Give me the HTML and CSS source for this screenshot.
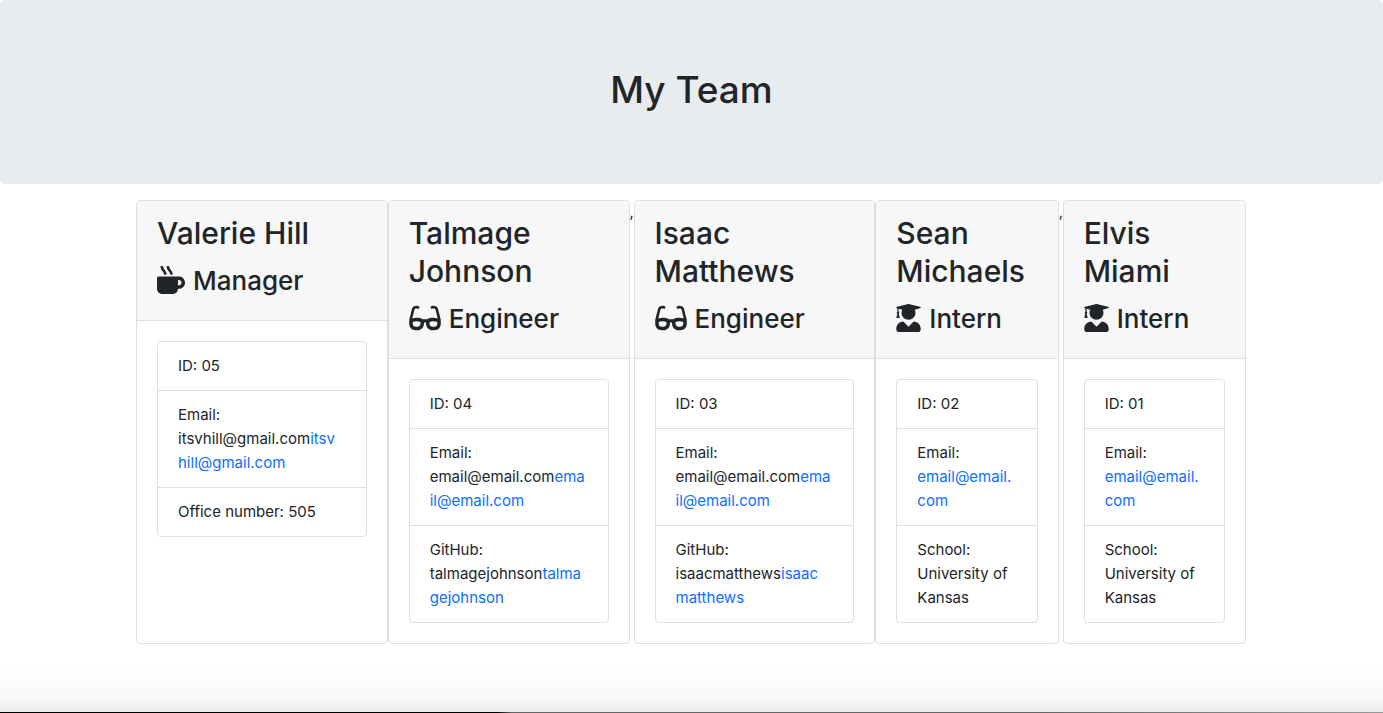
FILE: index.html
```html
<!DOCTYPE html>
<html lang="en">
<head>
<meta charset="utf-8">
<meta name="viewport" content="width=device-width, initial-scale=1">
<title>My Team</title>
<link rel="stylesheet" href="styles.css">
</head>
<body>
<svg class="sprite" aria-hidden="true">
  <symbol id="mug" viewBox="0 0 512 512"><path d="M127.1 146.5c1.3 7.7 8 13.5 16 13.5h16.5c9.8 0 17.6-8.5 16.3-18-3.8-28.2-16.4-54.2-36.6-74.7-14.4-14.7-23.6-33.3-26.4-53.5C111.8 5.9 105 0 96.8 0H80.4C70.6 0 63 8.5 64.1 18c3.9 31.9 18 61.3 40.6 84.4 12 12.2 19.7 27.5 22.4 44.1zm112 0c1.3 7.7 8 13.5 16 13.5h16.5c9.8 0 17.6-8.5 16.3-18-3.8-28.2-16.4-54.2-36.6-74.7-14.4-14.7-23.6-33.3-26.4-53.5C223.8 5.9 217 0 208.8 0h-16.4c-9.8 0-17.5 8.5-16.3 18 3.9 31.9 18 61.3 40.6 84.4 12 12.2 19.7 27.5 22.4 44.1zM400 192H32c-17.7 0-32 14.3-32 32v192c0 53 43 96 96 96h192c53 0 96-43 96-96h16c61.8 0 112-50.2 112-112s-50.2-112-112-112zm0 160h-16v-96h16c26.5 0 48 21.5 48 48s-21.5 48-48 48z"/></symbol>
  <symbol id="glasses" viewBox="0 0 576 512"><path d="M574.1 280.37L528.75 98.66c-5.91-23.7-21.59-44.05-43-55.81-21.44-11.73-46.97-14.11-70.19-6.33l-15.25 5.08c-8.39 2.79-12.92 11.86-10.12 20.24l5.06 15.18c2.79 8.38 11.85 12.91 20.23 10.12l13.18-4.39c10.87-3.62 23-3.57 33.16 1.73 10.29 5.37 17.57 14.56 20.37 25.82l38.46 153.82c-22.19-6.81-49.79-12.46-81.2-12.46-34.77 0-73.98 7.02-114.85 26.74h-73.18c-40.87-19.74-80.08-26.75-114.86-26.75-31.42 0-59.02 5.65-81.21 12.46l38.46-153.83c2.79-11.25 10.09-20.45 20.38-25.81 10.16-5.3 22.28-5.35 33.15-1.73l13.17 4.39c8.38 2.79 17.44-1.74 20.23-10.12l5.06-15.18c2.8-8.38-1.73-17.45-10.12-20.24l-15.25-5.08c-23.22-7.78-48.75-5.41-70.19 6.33-21.41 11.77-37.09 32.11-43 55.8L1.9 280.37A64.218 64.218 0 0 0 0 295.86v70.25C0 429.01 51.58 480 115.2 480h37.12c60.28 0 110.37-45.94 114.88-105.37l2.93-38.63h35.75l2.93 38.63C313.31 434.06 363.4 480 423.68 480h37.12c63.62 0 115.2-50.99 115.2-113.88v-70.25c0-5.23-.64-10.43-1.9-15.5zm-370.72 89.42c-1.97 25.91-24.4 46.21-51.06 46.21H115.2C86.97 416 64 393.62 64 366.11v-37.54c18.12-6.49 43.42-12.92 72.58-12.92 23.86 0 47.26 4.33 69.93 12.92l-3.13 41.22zM512 366.12c0 27.51-22.97 49.88-51.2 49.88h-37.12c-26.67 0-49.1-20.3-51.06-46.21l-3.13-41.22c22.67-8.59 46.08-12.92 69.95-12.92 29.12 0 54.43 6.44 72.55 12.93v37.54z"/></symbol>
  <symbol id="graduate" viewBox="0 0 448 512"><path d="M319.4 320.6L224 416l-95.4-95.4C57.1 323.7 0 382.2 0 454.4v9.6c0 26.5 21.5 48 48 48h352c26.5 0 48-21.5 48-48v-9.6c0-72.2-57.1-130.7-128.6-133.8zM13.6 79.8l6.4 1.5v58.4c-7 4.2-12 11.5-12 20.3 0 8.4 4.6 15.4 11.1 19.7L3.5 242c-1.7 6.9 2.1 14 7.6 14h41.8c5.5 0 9.3-7.1 7.6-14l-15.6-62.3C51.4 175.4 56 168.4 56 160c0-8.8-5-16.1-12-20.3V87.1l66 15.9c-8.6 17.2-14 36.4-14 57 0 70.7 57.3 128 128 128s128-57.3 128-128c0-20.6-5.3-39.8-14-57l96.3-23.2c18.2-4.4 18.2-27.1 0-31.5l-190.4-46c-13-3.1-26.7-3.1-39.7 0L13.6 48.2c-18.1 4.4-18.1 27.2 0 31.6z"/></symbol>
</svg>

<header class="banner"><h1 class="banner-title">My Team</h1></header>

<main class="team">
  <section class="card manager">
    <div class="card-header">
      <h2 class="name">Valerie Hill</h2>
      <h3 class="role"><svg class="icon icon-mug" aria-hidden="true"><use href="#mug"/></svg>Manager</h3>
    </div>
    <div class="card-body">
      <ul class="details">
        <li class="detail">ID: 05</li>
        <li class="detail">Email: <br>itsvhill@gmail.com<a class="link" href="mailto:itsvhill@gmail.com">itsv<wbr>hill@gmail.com</a></li>
        <li class="detail">Office number: 505</li>
      </ul>
    </div>
  </section>
  <section class="card engineer">
    <div class="card-header">
      <h2 class="name">Talmage Johnson</h2>
      <h3 class="role"><svg class="icon icon-glasses" aria-hidden="true"><use href="#glasses"/></svg>Engineer</h3>
    </div>
    <div class="card-body">
      <ul class="details">
        <li class="detail">ID: 04</li>
        <li class="detail">Email: <br>email@email.com<a class="link" href="mailto:email@email.com">ema<wbr>il@email.com</a></li>
        <li class="detail">GitHub: <br>talmagejohnson<a class="link" href="https://github.com/talmagejohnson">talma<wbr>gejohnson</a></li>
      </ul>
    </div>
  </section>
  <span class="separator">,</span>
  <section class="card engineer">
    <div class="card-header">
      <h2 class="name">Isaac Matthews</h2>
      <h3 class="role"><svg class="icon icon-glasses" aria-hidden="true"><use href="#glasses"/></svg>Engineer</h3>
    </div>
    <div class="card-body">
      <ul class="details">
        <li class="detail">ID: 03</li>
        <li class="detail">Email: <br>email@email.com<a class="link" href="mailto:email@email.com">ema<wbr>il@email.com</a></li>
        <li class="detail">GitHub: <br>isaacmatthews<a class="link" href="https://github.com/isaacmatthews">isaac<wbr>matthews</a></li>
      </ul>
    </div>
  </section>
  <section class="card intern">
    <div class="card-header">
      <h2 class="name">Sean Michaels</h2>
      <h3 class="role"><svg class="icon icon-graduate" aria-hidden="true"><use href="#graduate"/></svg>Intern</h3>
    </div>
    <div class="card-body">
      <ul class="details">
        <li class="detail">ID: 02</li>
        <li class="detail">Email: <br><a class="link" href="mailto:email@email.com">email@email.<wbr>com</a></li>
        <li class="detail">School: University of Kansas</li>
      </ul>
    </div>
  </section>
  <span class="separator">,</span>
  <section class="card intern">
    <div class="card-header">
      <h2 class="name">Elvis <br>Miami</h2>
      <h3 class="role"><svg class="icon icon-graduate" aria-hidden="true"><use href="#graduate"/></svg>Intern</h3>
    </div>
    <div class="card-body">
      <ul class="details">
        <li class="detail">ID: 01</li>
        <li class="detail">Email: <br><a class="link" href="mailto:email@email.com">email@email.<wbr>com</a></li>
        <li class="detail">School: University of Kansas</li>
      </ul>
    </div>
  </section>
</main>
<div class="window-edge"></div>
</body>
</html>
```

FILE: styles.css
```css
* {
  box-sizing: border-box;
}

body {
  margin: 0;
  min-height: 100vh;
  display: flex;
  flex-direction: column;
  background: #fff;
  color: #212529;
  font-family: Inter, "Liberation Sans", sans-serif;
  font-size: 15px;
  line-height: 24px;
}

.sprite {
  position: absolute;
  width: 0;
  height: 0;
}

.banner {
  padding: 66px 32px 62px;
  margin-bottom: 16px;
  border-radius: 5px;
  background: #e9ecef;
  text-align: center;
}

.banner-title {
  margin: 0 0 8px;
  font-size: 37px;
  font-weight: 500;
  line-height: 48px;
}

.team {
  display: flex;
  width: 100%;
  max-width: 1139px;
  margin: 0 auto;
  padding: 0 15px 0 14px;
}

.card {
  min-width: 0;
  border: 1px solid #dfdfdf;
  border-radius: 4px;
  background: #fff;
  overflow: hidden;
}

.manager {
  flex: 252 1 0;
}

.engineer {
  flex: 242 1 0;
}

.intern {
  flex: 183 1 0;
}

.separator {
  width: 4px;
}

.card-header {
  padding: 13px 20px 10px;
  border-bottom: 1px solid #dfdfdf;
  background: #f7f7f7;
}

.name {
  margin: 0 0 8px;
  font-size: 30px;
  font-weight: 500;
  line-height: 38px;
}

.role {
  margin: 0 0 8px;
  font-size: 26px;
  font-weight: 500;
  line-height: 42px;
  white-space: nowrap;
}

.icon {
  height: 28px;
  margin-right: 8px;
  vertical-align: -4px;
  fill: currentColor;
}

.icon-mug {
  width: 28px;
}

.icon-glasses {
  width: 32px;
}

.icon-graduate {
  width: 25px;
}

.card-body {
  padding: 20px;
}

.details {
  margin: 0;
  padding: 0;
  list-style: none;
  border: 1px solid #dfdfdf;
  border-radius: 4px;
}

.detail {
  padding: 12px 20px;
}

.detail + .detail {
  border-top: 1px solid #dfdfdf;
}

.link {
  color: #0d6efd;
  text-decoration: none;
}

.window-edge {
  height: 48px;
  margin-top: auto;
  border-bottom: 1px solid;
  border-image: linear-gradient(to right, #000 36%, #666 37%, #666 75%, #999) 1;
  background: linear-gradient(#fff, #fafafa 60%, #eee);
}
```
